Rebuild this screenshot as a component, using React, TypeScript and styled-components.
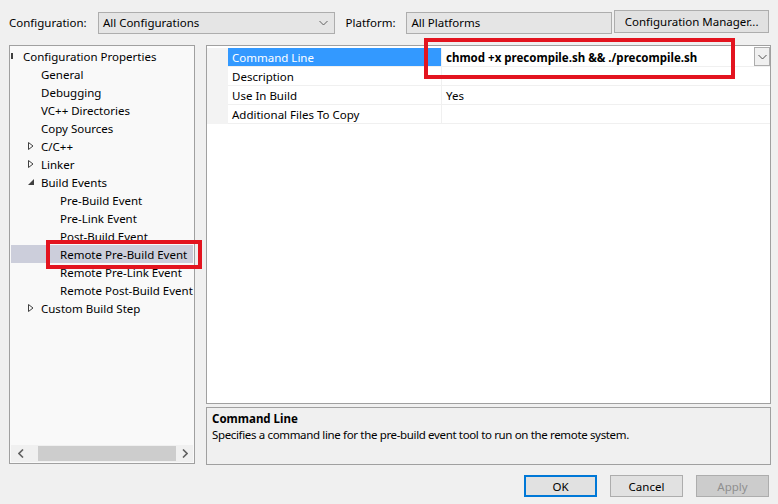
import styled, { createGlobalStyle } from 'styled-components';

const Global = createGlobalStyle`
html, body {
  margin: 0;
  padding: 0;
  background: #f0f0f0;
}
body {
  font-family: "Noto Sans", "Segoe UI", sans-serif;
  font-size: 11.5px;
  color: #000;
}
`

const Dialog = styled.div`
width: 778px;
height: 504px;
box-sizing: border-box;
background: #f0f0f0;
display: flex;
flex-direction: column;
`

const TopBar = styled.div`
height: 45px;
display: flex;
align-items: center;
padding: 0 9px;
box-sizing: border-box;
`

const Label = styled.span<{ $w: number; $pad?: number }>`
width: ${p => p.$w}px;
padding-left: ${p => p.$pad ?? 0}px;
box-sizing: border-box;
white-space: nowrap;
`

const Combo = styled.div<{ $w: number }>`
width: ${p => p.$w}px;
height: 22px;
box-sizing: border-box;
border: 1px solid #adadad;
background: #e5e5e5;
display: flex;
align-items: center;
justify-content: space-between;
padding: 0 6px 0 4px;
`

const TopButton = styled.div`
margin-left: 2px;
width: 155px;
height: 23px;
box-sizing: border-box;
border: 1px solid #adadad;
background: #e1e1e1;
display: flex;
align-items: center;
justify-content: center;
margin-top: -2px;
`

const Main = styled.div`
display: flex;
padding: 0 7px 0 9px;
gap: 11px;
height: 420px;
`

const Tree = styled.div`
width: 186px;
height: 419px;
box-sizing: border-box;
border: 1px solid #a0a0a0;
background: #f9f9f9;
display: flex;
flex-direction: column;
justify-content: space-between;
padding: 1px;
`

const TreeList = styled.div`
display: flex;
flex-direction: column;
`

const TreeRow = styled.div<{ $indent: number; $selected?: boolean }>`
position: relative;
height: 18px;
display: flex;
align-items: center;
padding-left: ${p => p.$indent}px;
background: ${p => (p.$selected ? '#cccedb' : 'transparent')};
white-space: nowrap;
`

const Expander = styled.span<{ $w: number }>`
width: ${p => p.$w}px;
flex-shrink: 0;
display: inline-flex;
align-items: center;
`

const Callout = styled.div<{ $l: number; $t: number; $w: number; $h: number }>`
position: absolute;
left: ${p => p.$l}px;
top: ${p => p.$t}px;
width: ${p => p.$w}px;
height: ${p => p.$h}px;
box-sizing: border-box;
border: 4px solid #e3141f;
pointer-events: none;
`

const HScroll = styled.div`
height: 17px;
display: flex;
align-items: center;
background: #f0f0f0;
`

const ScrollArrow = styled.div`
width: 17px;
display: flex;
justify-content: center;
align-items: center;
`

const Track = styled.div<{ $w: number }>`
width: ${p => p.$w}px;
`

const Thumb = styled.div`
flex: 1;
height: 15px;
background: #cdcdcd;
`

const RightColumn = styled.div`
flex: 1;
display: flex;
flex-direction: column;
gap: 3px;
`

const Grid = styled.div`
position: relative;
height: 359px;
box-sizing: border-box;
border: 1px solid #a0a0a0;
background: #fff;
padding-top: 2px;
`

const GridRow = styled.div`
height: 19px;
display: grid;
grid-template-columns: 21px 214px 1fr;
`

const Gutter = styled.div`
background: #f3f3f3;
`

const NameCell = styled.div<{ $selected?: boolean }>`
display: flex;
align-items: center;
padding-left: 4px;
background: ${p => (p.$selected ? '#3399ff' : '#fff')};
color: ${p => (p.$selected ? '#fff' : '#000')};
border-bottom: 1px solid #f0f0f0;
border-right: 1px solid #f0f0f0;
`

const ValueCell = styled.div<{ $bold?: boolean }>`
display: flex;
align-items: center;
justify-content: space-between;
padding-left: 4px;
font-weight: ${p => (p.$bold ? 700 : 400)};
border-bottom: 1px solid #f0f0f0;
`

const DropButton = styled.div`
width: 16px;
height: 19px;
box-sizing: border-box;
border: 1px solid #adadad;
background: #f0f0f0;
display: flex;
align-items: center;
justify-content: center;
margin-top: -1px;
`

const DescPanel = styled.div`
height: 58px;
box-sizing: border-box;
border: 1px solid #a0a0a0;
background: #f0f0f0;
padding: 3px 5px;
display: flex;
flex-direction: column;
gap: 1px;
`

const DescTitle = styled.div`
font-weight: 700;
`

const DescText = styled.div`
letter-spacing: -0.35px;
`

const ButtonRow = styled.div`
display: flex;
justify-content: flex-end;
gap: 13px;
padding: 10px 9px 0 0;
`

const Button = styled.div<{ $default?: boolean; $disabled?: boolean }>`
width: 73px;
height: 22px;
box-sizing: border-box;
display: flex;
align-items: center;
justify-content: center;
border: ${p => (p.$default ? '2px solid #0078d7' : '1px solid #adadad')};
background: ${p => (p.$disabled ? '#cccccc' : '#e1e1e1')};
color: ${p => (p.$disabled ? '#8f8f8f' : '#000')};
`

function Chevron({ color = '#606060' }: { color?: string }) {
  return (
    <svg width="9" height="6" viewBox="0 0 9 6">
      <path d="M0.5 1 L4.5 5 L8.5 1" fill="none" stroke={color} strokeWidth="1" />
    </svg>
  );
}

function Collapsed() {
  return (
    <svg width="8" height="10" viewBox="0 0 8 10">
      <path d="M1.5 1.5 L6 5 L1.5 8.5 Z" fill="none" stroke="#404040" strokeWidth="1" />
    </svg>
  );
}

function Expanded() {
  return (
    <svg width="8" height="8" viewBox="0 0 8 8">
      <path d="M7 1 L7 7 L1 7 Z" fill="#404040" />
    </svg>
  );
}

function ArrowLeft() {
  return (
    <svg width="6" height="9" viewBox="0 0 6 9">
      <path d="M5 0.5 L1 4.5 L5 8.5" fill="none" stroke="#606060" strokeWidth="1.6" />
    </svg>
  );
}

function ArrowRight() {
  return (
    <svg width="6" height="9" viewBox="0 0 6 9">
      <path d="M1 0.5 L5 4.5 L1 8.5" fill="none" stroke="#606060" strokeWidth="1.6" />
    </svg>
  );
}

type Node = { label: string; indent: number; state?: 'open' | 'closed' | 'cut'; selected?: boolean };

// indents measured from the tree's inner left edge (x = 11)
const nodes: Node[] = [
  { label: 'Configuration Properties', indent: 0, state: 'cut' },
  { label: 'General', indent: 16 },
  { label: 'Debugging', indent: 16 },
  { label: 'VC++ Directories', indent: 16 },
  { label: 'Copy Sources', indent: 16 },
  { label: 'C/C++', indent: 16, state: 'closed' },
  { label: 'Linker', indent: 16, state: 'closed' },
  { label: 'Build Events', indent: 16, state: 'open' },
  { label: 'Pre-Build Event', indent: 35 },
  { label: 'Pre-Link Event', indent: 35 },
  { label: 'Post-Build Event', indent: 35 },
  { label: 'Remote Pre-Build Event', indent: 35, selected: true },
  { label: 'Remote Pre-Link Event', indent: 35 },
  { label: 'Remote Post-Build Event', indent: 35 },
  { label: 'Custom Build Step', indent: 16, state: 'closed' },
];

const props = [
  { name: 'Command Line', value: 'chmod +x precompile.sh && ./precompile.sh', selected: true },
  { name: 'Description', value: '' },
  { name: 'Use In Build', value: 'Yes' },
  { name: 'Additional Files To Copy', value: '' },
];

function App(): JSX.Element {
  return (
    <Dialog>
      <Global />
      <TopBar>
        <Label $w={89}>Configuration:</Label>
        <Combo $w={237}>
          <span>All Configurations</span>
          <Chevron />
        </Combo>
        <Label $w={72} $pad={11}>Platform:</Label>
        <Combo $w={206}>
          <span>All Platforms</span>
        </Combo>
        <TopButton>Configuration Manager...</TopButton>
      </TopBar>

      <Main>
        <Tree>
          <TreeList>
            {nodes.map(n => (
              <TreeRow key={n.label} $indent={n.indent} $selected={n.selected}>
                <Expander $w={n.state === 'cut' ? 12 : 14}>
                  {n.state === 'closed' && <Collapsed />}
                  {n.state === 'open' && <Expanded />}
                  {n.state === 'cut' && (
                    <svg width="2" height="6"><rect width="2" height="6" fill="#404040" /></svg>
                  )}
                </Expander>
                <span>{n.label}</span>
                {n.selected && <Callout $l={35} $t={-5} $w={156} $h={29} />}
              </TreeRow>
            ))}
          </TreeList>
          <HScroll>
            <ScrollArrow style={{ width: 20 }}><ArrowLeft /></ScrollArrow>
            <Track $w={7} />
            <Thumb />
            <ScrollArrow><ArrowRight /></ScrollArrow>
          </HScroll>
        </Tree>

        <RightColumn>
          <Grid>
            {props.map(p => (
              <GridRow key={p.name}>
                <Gutter />
                <NameCell $selected={p.selected}>{p.name}</NameCell>
                <ValueCell $bold={p.selected}>
                  <span>{p.value}</span>
                  {p.selected && <DropButton><Chevron color="#505050" /></DropButton>}
                </ValueCell>
              </GridRow>
            ))}
            <Callout $l={217} $t={-8} $w={311} $h={41} />
          </Grid>
          <DescPanel>
            <DescTitle>Command Line</DescTitle>
            <DescText>Specifies a command line for the pre-build event tool to run on the remote system.</DescText>
          </DescPanel>
        </RightColumn>
      </Main>

      <ButtonRow>
        <Button $default>OK</Button>
        <Button>Cancel</Button>
        <Button $disabled>Apply</Button>
      </ButtonRow>
    </Dialog>
  );
}

export default App;
